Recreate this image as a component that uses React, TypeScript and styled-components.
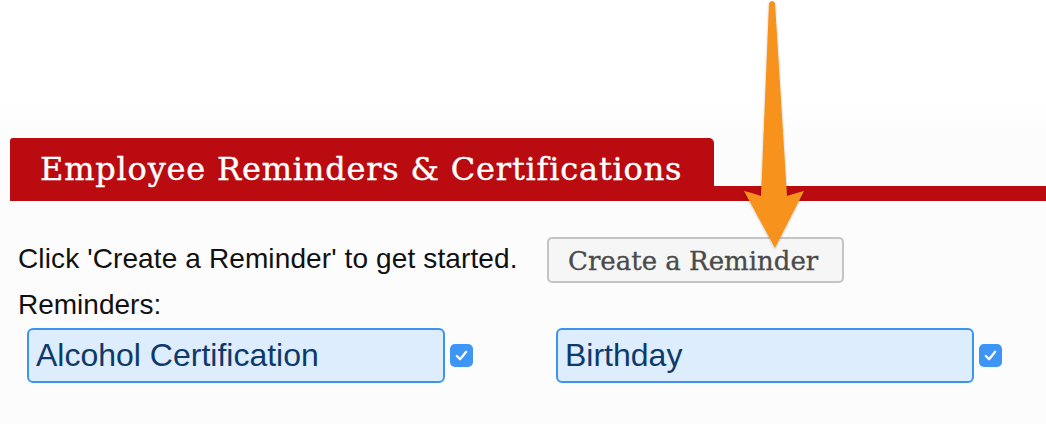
import styled, { createGlobalStyle } from 'styled-components';

const GlobalStyle = createGlobalStyle`
	html, body {
		margin: 0;
		padding: 0;
		background: #ffffff;
	}
	* {
		box-sizing: border-box;
	}
`;

const Page = styled.div`
	position: relative;
	width: 1046px;
	height: 424px;
	overflow: hidden;
	padding-top: 138px;
	background: linear-gradient(#ffffff 100px, #fcfcfc 140px);
`;

const Header = styled.div`
	margin-left: 10px;
	border-bottom: 15px solid #b90b10;
	display: flex;
`;

const Tab = styled.h2`
	margin: 0;
	height: 48px;
	padding: 0 32px 0 30px;
	background: #b90b10;
	border-radius: 3px 5px 0 0;
	color: #ffffff;
	font-family: 'DejaVu Serif', 'Liberation Serif', serif;
	font-weight: normal;
	font-size: 32px;
	line-height: 62px;
	letter-spacing: 0.8px;
	white-space: nowrap;
	-webkit-text-stroke: 0.4px #ffffff;
`;

const Content = styled.div`
	padding: 36px 0 0 18px;
	font-family: 'Liberation Sans', Arial, sans-serif;
	color: #111111;
`;

const IntroRow = styled.div`
	display: flex;
	align-items: center;
	gap: 29px;
	height: 46px;
`;

const Lead = styled.p`
	margin: 0 0 4px 0;
	font-size: 28px;
	line-height: 31px;
	letter-spacing: 0.12px;
`;

const CreateButton = styled.button`
	height: 46px;
	width: 297px;
	border: 2px solid #c4c4c4;
	border-radius: 5px;
	background: #f6f6f6;
	color: #4a4a4a;
	font-family: 'DejaVu Serif', 'Liberation Serif', serif;
	font-size: 26px;
	padding: 2px 4px 0 0;
	-webkit-text-stroke: 0.3px #4a4a4a;
	cursor: pointer;
`;

const SectionLabel = styled.div`
	margin-top: 6px;
	font-size: 28px;
	line-height: 31px;
`;

const ReminderGrid = styled.div`
	display: grid;
	grid-template-columns: repeat(2, 529px);
	margin: 8px 0 0 9px;
`;

const ReminderItem = styled.div`
	display: flex;
	align-items: center;
	gap: 5px;
`;

const ReminderInput = styled.input`
	width: 418px;
	height: 55px;
	border: 2px solid #3d94ef;
	border-radius: 6px;
	background: #ddedfd;
	color: #0e3a6a;
	font-family: 'Liberation Sans', Arial, sans-serif;
	font-size: 32px;
	padding: 0 7px;
	outline: none;
`;

const Check = styled.span<{ $on: boolean }>`
	width: 23px;
	height: 23px;
	border-radius: 5px;
	background: ${(p) => (p.$on ? '#3d95f5' : '#ffffff')};
	border: ${(p) => (p.$on ? 'none' : '1px solid #999')};
	display: flex;
	align-items: center;
	justify-content: center;
`;

const Arrow = styled.svg`
	position: absolute;
	left: 736px;
	top: 0;
	overflow: visible;
`;

const reminders = [
	{ name: 'Alcohol Certification', active: true },
	{ name: 'Birthday', active: true }
];

const App = () => {
	return (
		<Page>
			<GlobalStyle />
			<Header>
				<Tab>Employee Reminders &amp; Certifications</Tab>
			</Header>
			<Content>
				<IntroRow>
					<Lead>Click 'Create a Reminder' to get started.</Lead>
					<CreateButton>Create a Reminder</CreateButton>
				</IntroRow>
				<SectionLabel>Reminders:</SectionLabel>
				<ReminderGrid>
					{reminders.map((r) => (
						<ReminderItem key={r.name}>
							<ReminderInput defaultValue={r.name} />
							<Check $on={r.active}>
								{r.active && (
									<svg width="15" height="15" viewBox="0 0 16 16">
										<path
											d="M3 8.5 L6.5 12 L13 4"
											fill="none"
											stroke="#ffffff"
											strokeWidth="2.4"
											strokeLinecap="round"
											strokeLinejoin="round"
										/>
									</svg>
								)}
							</Check>
						</ReminderItem>
					))}
				</ReminderGrid>
			</Content>
			{/* call-out arrow pointing at the button */}
			<Arrow width="72" height="256" viewBox="0 0 72 256">
				<defs>
					<filter id="arrowShadow" x="-20%" y="-5%" width="140%" height="110%">
						<feDropShadow dx="0" dy="1" stdDeviation="1.2" floodColor="#000" floodOpacity="0.25" />
					</filter>
				</defs>
				<path
					d="M33 3 Q36 -1 39 3 L51 196 Q60 193 68 191 L39 248 L8 191 Q17 193 25 196 Z"
					fill="#f7931e"
					filter="url(#arrowShadow)"
				/>
			</Arrow>
		</Page>
	);
};

export default App;
